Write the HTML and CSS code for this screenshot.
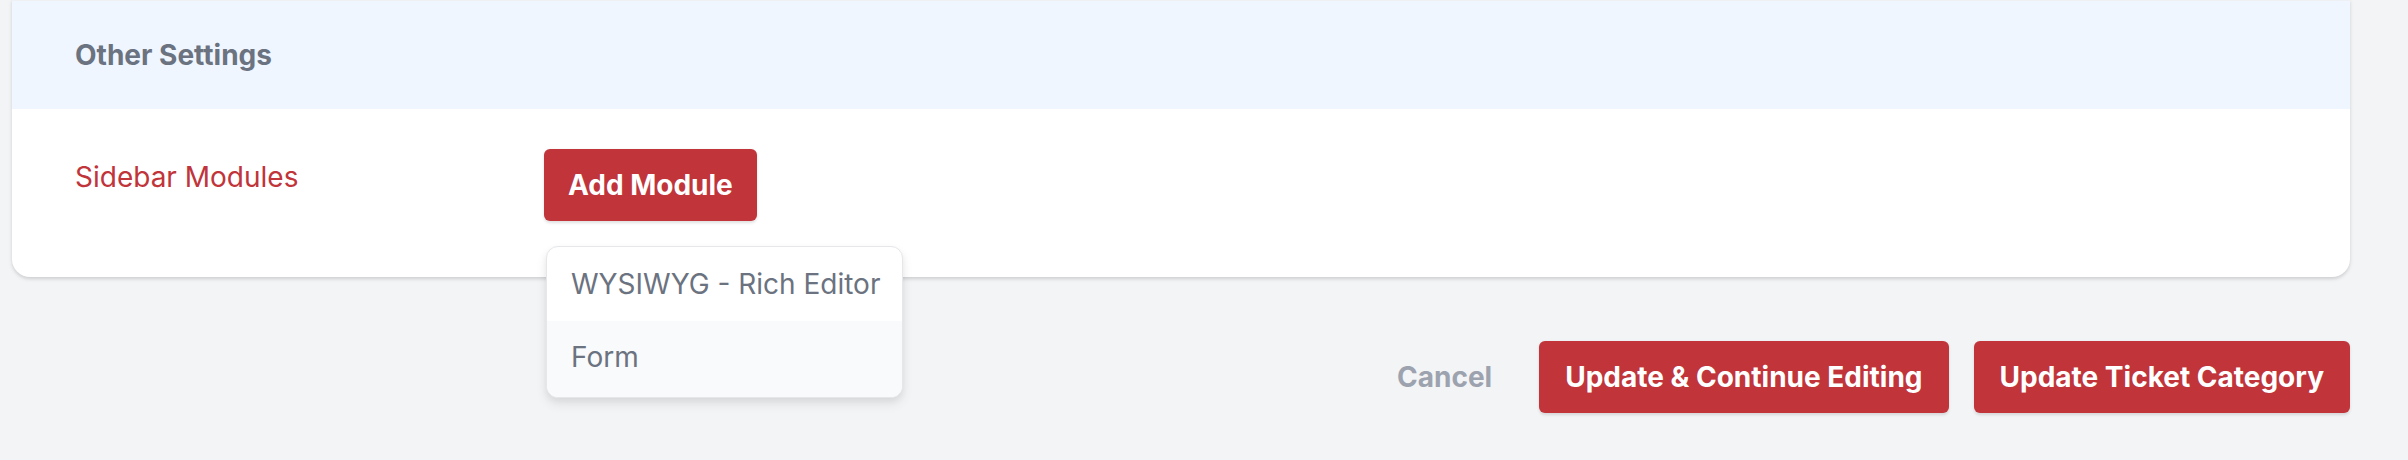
FILE: index.html
```html
<!DOCTYPE html>
<html lang="en">
<head>
<meta charset="utf-8">
<title>Other Settings</title>
<link rel="stylesheet" href="styles.css">
</head>
<body>
<div class="page">
  <section class="card">
    <header class="card-header">
      <h2 class="card-title">Other Settings</h2>
    </header>
    <div class="field-row">
      <label class="field-label">Sidebar Modules</label>
      <div class="field-control">
        <button class="btn btn-primary" type="button">Add Module</button>
        <ul class="dropdown">
          <li class="dropdown-item">WYSIWYG - Rich Editor</li>
          <li class="dropdown-item dropdown-item-hover">Form</li>
        </ul>
      </div>
    </div>
  </section>
  <footer class="actions">
    <a class="cancel-link" href="#">Cancel</a>
    <button class="btn btn-primary btn-wide" type="button">Update &amp; Continue Editing</button>
    <button class="btn btn-primary btn-wide" type="button">Update Ticket Category</button>
  </footer>
</div>
</body>
</html>
```

FILE: styles.css
```css
* {
  box-sizing: border-box;
}

html, body {
  margin: 0;
  padding: 0;
}

body {
  background: #f3f4f6;
  font-family: Inter, "Noto Sans", "Liberation Sans", sans-serif;
  font-size: 28px;
  line-height: 40.5px;
  color: #6b7280;
  width: 2408px;
  height: 460px;
  overflow: hidden;
}

.page {
  padding: 0 58px 0 12px;
}

.card {
  background: #ffffff;
  border-top: 1px solid #eef0f3;
  border-radius: 0 0 18px 18px;
  box-shadow: 0 1.5px 4.5px rgba(0, 0, 0, 0.1), 0 1.5px 3px rgba(0, 0, 0, 0.06);
}

.card-header {
  background: #eff6ff;
  height: 108px;
  display: flex;
  align-items: center;
  padding: 0 63px;
}

.card-title {
  margin: 0;
  font-size: 28px;
  font-weight: 700;
  line-height: 40.5px;
  color: #6b7280;
}

.field-row {
  display: grid;
  grid-template-columns: 469px 1fr;
  padding: 40px 63px 56px;
}

.field-label {
  color: #c0343a;
  padding-top: 8px;
}

.field-control {
  position: relative;
}

.btn {
  font-family: inherit;
  font-size: 28px;
  line-height: 40.5px;
  font-weight: 700;
  color: #ffffff;
  background: #c0343a;
  border: 0;
  border-radius: 6px;
  padding: 16px 24px 15.5px;
  box-shadow: 0 1.5px 3px rgba(0, 0, 0, 0.12);
  cursor: pointer;
}

.btn-wide {
  padding-left: 26px;
  padding-right: 26px;
}

.dropdown {
  position: absolute;
  left: 2px;
  top: 97px;
  width: 357px;
  margin: 0;
  padding: 0;
  list-style: none;
  background: #ffffff;
  border: 1px solid #e5e7eb;
  border-radius: 12px;
  overflow: hidden;
  box-shadow: 0 6px 12px rgba(0, 0, 0, 0.08), 0 3px 6px rgba(0, 0, 0, 0.05);
  z-index: 10;
}

.dropdown-item {
  padding: 16.5px 24px 16.5px;
  color: #6b7280;
  white-space: nowrap;
}

.dropdown-item-hover {
  background: #f9fafb;
  padding-bottom: 19px;
}

.actions {
  display: flex;
  justify-content: flex-end;
  align-items: center;
  gap: 25px;
  margin-top: 64px;
}

.cancel-link {
  color: #9ca3af;
  font-weight: 700;
  text-decoration: none;
  margin-right: 22px;
}
```
